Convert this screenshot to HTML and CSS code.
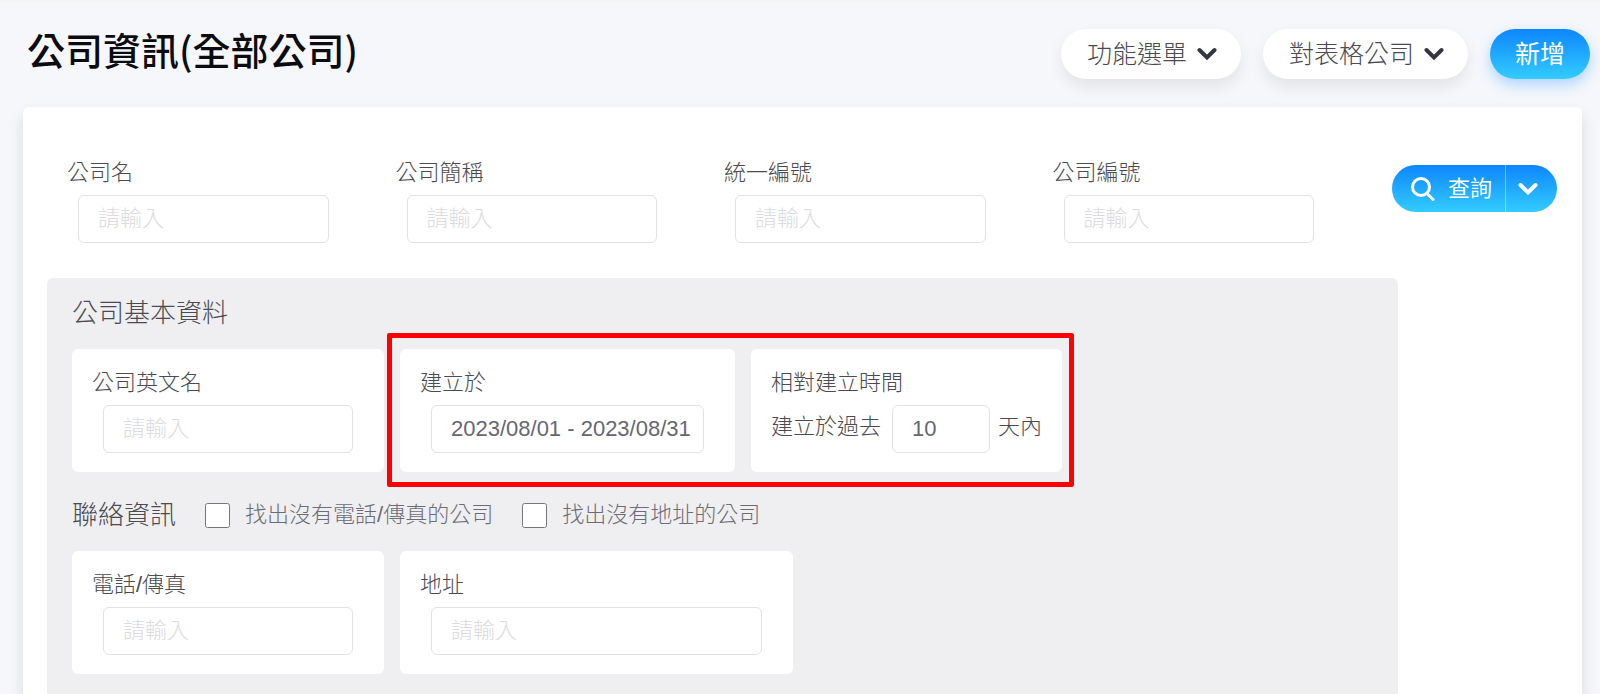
FILE: index.html
```html
<!doctype html>
<html lang="zh-Hant">
  <head>
    <meta charset="UTF-8" />
    <meta name="viewport" content="width=device-width, initial-scale=1.0" />
    <title>公司資訊</title>
    <link rel="stylesheet" href="styles.css">
  </head>
  <body>
    <header class="page-header">
      <h1>公司資訊(全部公司)</h1>
      <div class="actions">
        <button type="button" class="btn">
          功能選單
          <svg class="chevron" viewBox="0 0 20 14"><path d="M2.5 3 L10 10.5 L17.5 3" /></svg>
        </button>
        <button type="button" class="btn">
          對表格公司
          <svg class="chevron" viewBox="0 0 20 14"><path d="M2.5 3 L10 10.5 L17.5 3" /></svg>
        </button>
        <button type="button" class="btn btn-primary">新增</button>
      </div>
    </header>

    <main class="card">
      <form class="search-row">
        <div class="field">
          <label for="name">公司名</label>
          <input type="text" id="name" placeholder="請輸入" />
        </div>
        <div class="field">
          <label for="shortName">公司簡稱</label>
          <input type="text" id="shortName" placeholder="請輸入" />
        </div>
        <div class="field">
          <label for="taxId">統一編號</label>
          <input type="text" id="taxId" placeholder="請輸入" />
        </div>
        <div class="field">
          <label for="companyNo">公司編號</label>
          <input type="text" id="companyNo" placeholder="請輸入" />
        </div>
        <div class="search-group">
          <button type="button" class="search-btn">
            <svg class="search-icon" viewBox="0 0 24 24">
              <circle cx="10" cy="10" r="8.5" />
              <path d="M16 16.5 L22 22.5" />
            </svg>
            查詢
          </button>
          <button type="button" class="search-more" aria-label="更多條件">
            <svg class="chevron" viewBox="0 0 20 14"><path d="M2.5 3 L10 10.5 L17.5 3" /></svg>
          </button>
        </div>
      </form>

      <section class="panel">
        <div class="section-head">
          <h2>公司基本資料</h2>
        </div>
        <div class="tiles">
          <div class="tile">
            <label for="engName">公司英文名</label>
            <input type="text" id="engName" placeholder="請輸入" />
          </div>
          <div class="tiles highlight">
            <div class="tile tile-date">
              <label for="createdAt">建立於</label>
              <input type="text" id="createdAt" value="2023/08/01 - 2023/08/31" />
            </div>
            <div class="tile tile-days">
              <label for="days">相對建立時間</label>
              <div class="days">
                <span>建立於過去</span>
                <input type="text" id="days" value="10" />
                <span>天內</span>
              </div>
            </div>
          </div>
        </div>

        <div class="section-head">
          <h2>聯絡資訊</h2>
          <label class="check"><input type="checkbox" />找出沒有電話/傳真的公司</label>
          <label class="check"><input type="checkbox" />找出沒有地址的公司</label>
        </div>
        <div class="tiles">
          <div class="tile">
            <label for="phone">電話/傳真</label>
            <input type="text" id="phone" placeholder="請輸入" />
          </div>
          <div class="tile tile-address">
            <label for="address">地址</label>
            <input type="text" id="address" placeholder="請輸入" />
          </div>
        </div>
      </section>
    </main>
  </body>
</html>
```
FILE: styles.css
```css
* {
  box-sizing: border-box;
}

body {
  margin: 0;
  min-height: 100vh;
  display: flex;
  flex-direction: column;
  border-top: 2px solid #f4f6f4;
  background: #f5f7fb;
  color: #4a4a52;
  font-family: "Liberation Sans", "Noto Sans CJK TC", sans-serif;
  font-size: 22px;
  font-weight: 300;
  line-height: 32px;
}

button,
input {
  font: inherit;
}

h1,
h2 {
  margin: 0;
}

.page-header {
  display: flex;
  justify-content: space-between;
  align-items: flex-start;
  padding: 27px 10px 28px 27px;
}

h1 {
  color: #0c0c10;
  font-family: "Noto Sans CJK TC", sans-serif;
  font-size: 38px;
  font-weight: 500;
  line-height: 40px;
}

.actions {
  display: flex;
  gap: 22px;
}

.btn {
  display: flex;
  align-items: center;
  gap: 10px;
  height: 50px;
  padding: 0 24px 0 26px;
  border: none;
  border-radius: 25px;
  background: #fff;
  box-shadow: 0 8px 16px rgba(0, 0, 0, 0.08);
  color: #4a4a52;
  font-size: 25px;
  cursor: pointer;
}

.btn-primary {
  padding: 0 25px;
  background: linear-gradient(#0d86ff, #33ccff);
  box-shadow: 0 6px 14px rgba(13, 134, 255, 0.3);
  color: #fff;
  font-weight: 400;
}

.chevron {
  width: 20px;
  height: 14px;
  fill: none;
  stroke: #35353f;
  stroke-width: 4;
  stroke-linecap: round;
}

.card {
  flex: 1;
  display: flex;
  flex-direction: column;
  margin: 0 18px 0 23px;
  padding: 50px 24px 0;
  border-radius: 6px 6px 0 0;
  background: #fff;
  box-shadow: 0 8px 16px rgba(0, 0, 0, 0.12);
}

.search-row {
  display: grid;
  grid-template-columns: repeat(4, minmax(0, 1fr)) 177px;
  padding-left: 20px;
}

.field {
  padding-right: 56px;
}

.field,
.tile {
  display: flex;
  flex-direction: column;
  gap: 6px;
}

input[type="text"] {
  height: 48px;
  min-width: 0;
  margin: 0 11px;
  padding: 0 10px 0 19px;
  border: 1px solid #e2e2e5;
  border-radius: 6px;
  background: #fff;
  color: #666672;
  font-weight: 400;
}

input::placeholder {
  color: #dcdcde;
  font-weight: 300;
}

.search-group {
  display: flex;
  justify-self: end;
  height: 47px;
  margin: 8px 1px 0 0;
  border-radius: 24px;
  background: linear-gradient(#0d86ff, #33ccff);
}

.search-btn,
.search-more {
  display: flex;
  align-items: center;
  border: none;
  background: none;
  color: #fff;
  font-weight: 400;
  cursor: pointer;
}

.search-btn {
  gap: 13px;
  padding: 0 13px 0 19px;
}

.search-more {
  padding: 0 19px 0 12px;
  border-left: 1px solid rgba(255, 255, 255, 0.4);
}

.search-group .chevron {
  stroke: #fff;
}

.search-icon {
  width: 24px;
  height: 24px;
  fill: none;
  stroke: #fff;
  stroke-width: 3;
  stroke-linecap: round;
}

.panel {
  flex: 1;
  margin: 35px 160px 0 0;
  padding: 17px 25px 20px;
  border-radius: 6px 6px 0 0;
  background: #efeff1;
}

.section-head {
  display: flex;
  align-items: center;
  margin-bottom: 18px;
}

h2 {
  font-size: 26px;
  font-weight: 300;
  line-height: 36px;
}

.tiles {
  display: flex;
  gap: 16px;
}

.tiles + .section-head {
  margin-top: 25px;
}

.tile {
  width: 312px;
  padding: 18px 20px 19px;
  border-radius: 6px;
  background: #fff;
}

.tile-date {
  width: 335px;
}

.tile-days {
  width: auto;
}

.tile-address {
  width: 393px;
}

.highlight {
  position: relative;
}

/* red frame around the two creation date filters */
.highlight::after {
  content: "";
  position: absolute;
  inset: -16px -12px -15px -13px;
  border: 5px solid #f00;
  border-radius: 2px;
  pointer-events: none;
}

.days {
  display: flex;
  line-height: 44px;
}

.days input[type="text"] {
  width: 98px;
  margin: 0 8px 0 11px;
}

.check {
  display: flex;
  align-items: center;
  gap: 15px;
  margin-left: 29px;
  color: #6c6c78;
}

.check input {
  width: 25px;
  height: 25px;
  margin: 0;
}
```
